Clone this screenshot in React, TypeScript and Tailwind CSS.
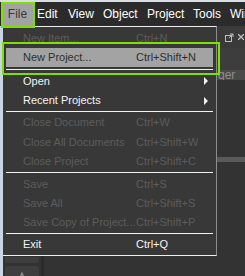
import React from 'react';

type Item =
  | { kind: 'sep'; h: string }
  | { kind: 'item'; label: string; shortcut?: string; disabled?: boolean; sub?: boolean; active?: boolean; h: string };

const items: Item[] = [
  { kind: 'item', label: 'New Item...', shortcut: 'Ctrl+N', disabled: true, h: 'h-[20px]' },
  { kind: 'item', label: 'New Project...', shortcut: 'Ctrl+Shift+N', active: true, h: 'h-[19px]' },
  { kind: 'sep', h: 'h-[4px]' },
  { kind: 'item', label: 'Open', sub: true, h: 'h-[20px]' },
  { kind: 'item', label: 'Recent Projects', sub: true, h: 'h-[19px]' },
  { kind: 'sep', h: 'h-[3px]' },
  { kind: 'item', label: 'Close Document', shortcut: 'Ctrl+W', disabled: true, h: 'h-[19px]' },
  { kind: 'item', label: 'Close All Documents', shortcut: 'Ctrl+Shift+W', disabled: true, h: 'h-[20px]' },
  { kind: 'item', label: 'Close Project', shortcut: 'Ctrl+Shift+C', disabled: true, h: 'h-[19px]' },
  { kind: 'sep', h: 'h-[3px]' },
  { kind: 'item', label: 'Save', shortcut: 'Ctrl+S', disabled: true, h: 'h-[20px]' },
  { kind: 'item', label: 'Save All', shortcut: 'Ctrl+Shift+S', disabled: true, h: 'h-[19px]' },
  { kind: 'item', label: 'Save Copy of Project...', shortcut: 'Ctrl+Shift+P', disabled: true, h: 'h-[19px]' },
  { kind: 'sep', h: 'h-[3px]' },
  { kind: 'item', label: 'Exit', shortcut: 'Ctrl+Q', h: 'h-[19px]' },
];

// menu bar labels with the width each one takes up
const menus = [
  { label: 'Edit', w: 'w-[31px]' },
  { label: 'View', w: 'w-[35px]' },
  { label: 'Object', w: 'w-[44px]' },
  { label: 'Project', w: 'w-[46px]' },
  { label: 'Tools', w: 'w-[37px]' },
  { label: 'Window', w: 'w-[50px]' },
];

function MenuRow({ item }: { item: Item }) {
  if (item.kind === 'sep') {
    return (
      <div className={`${item.h} flex items-center px-[3px]`}>
        <div className="h-px w-full bg-[#f2f2f2]" />
      </div>
    );
  }
  const color = item.active ? 'text-[#303030]' : item.disabled ? 'text-[#5c5c5c]' : 'text-[#f4f4f4]';
  return (
    <div className={`${item.h} px-[3px]`}>
      <div className={`h-full flex items-center ${item.active ? 'bg-[#a3a3a3]' : ''} ${color}`}>
        <span className="pl-[17px] w-[130px] shrink-0 whitespace-nowrap overflow-hidden">{item.label}</span>
        <span className="whitespace-nowrap">{item.shortcut}</span>
        {item.sub && (
          <svg width="5" height="8" viewBox="0 0 5 8" className="ml-auto mr-[4px]">
            <path d="M0 0 L4 4 L0 8 Z" fill="#f0f0f0" />
          </svg>
        )}
      </div>
    </div>
  );
}

export default function App() {
  return (
    <div className="relative w-[245px] h-[276px] overflow-hidden bg-[#333333] font-['Liberation_Sans',Arial,sans-serif] text-[11px] leading-none">
      <div className="h-[2px] bg-[#d9dee4]" />

      {/* menu bar */}
      <div className="h-[24px] flex items-center overflow-hidden bg-[#2b2b2b] text-[12px] text-white whitespace-nowrap">
        <div className="h-full ml-[2px] w-[31px] shrink-0 flex items-center justify-center bg-[#a3a3a3] text-[#3a3a3a]">
          File
        </div>
        <div className="w-[4px] shrink-0" />
        {menus.map((m) => (
          <div key={m.label} className={`${m.w} shrink-0 h-full flex items-center`}>
            {m.label}
          </div>
        ))}
      </div>

      <div className="flex h-[250px]">
        <div className="w-[3px] bg-[#c8d5e2]" />

        <div className="w-[214px] flex flex-col">
          {/* dropdown */}
          <div className="bg-[#383838] border-t border-t-[#efefef] border-b border-b-[#efefef] border-r border-r-[#8c8c8c] pt-px pb-px">
            {items.map((it, i) => (
              <MenuRow key={i} item={it} />
            ))}
          </div>
          {/* bits of the window under the menu */}
          <div className="flex-1 flex">
            <div className="w-[38px] flex flex-col gap-[3px] pt-px px-[2px]">
              <div className="h-[6px] rounded-b-[3px] bg-[#3e3e3e]" />
              <div className="h-[14px] rounded-[3px] bg-[#3e3e3e] flex items-end justify-center">
                <svg width="8" height="8" viewBox="0 0 8 8">
                  <path d="M1 8 L4 1 L7 8" stroke="#8a8a8a" strokeWidth="1.4" fill="none" />
                </svg>
              </div>
            </div>
            <div className="w-[3px] bg-[#2a2a2a]" />
          </div>
        </div>

        {/* right panel */}
        <div className="flex-1 flex flex-col">
          <div className="h-[22px] bg-[#3a3a3a] flex items-center justify-end gap-[4px] pr-[1px]">
            <svg width="9" height="9" viewBox="0 0 9 9">
              <rect x="0.5" y="2.5" width="6" height="6" fill="none" stroke="#bdbdbd" />
              <path d="M4 5 L8 1 M5 1 H8 V4" stroke="#bdbdbd" fill="none" />
            </svg>
            <svg width="6" height="6" viewBox="0 0 6 6">
              <path d="M0 0 L6 6 M6 0 L0 6" stroke="#bdbdbd" strokeWidth="1.3" />
            </svg>
          </div>
          <div className="h-[22px] bg-[#3d3d3d]" />
          <div className="h-[10px] bg-[#4a4a4a] flex items-center text-[12px] text-[#8e8e8e] pl-[1px] overflow-hidden">
            ger
          </div>
          <div className="h-[77px]" />
          <div className="h-[5px] bg-[#5a5a5a]" />
        </div>
      </div>

      {/* annotation boxes */}
      <div className="absolute left-[1px] top-[2px] w-[34px] h-[26px] border-2 border-[#7ee000]" />
      <div className="absolute left-[2px] top-[42px] w-[218px] h-[33px] border-[2.5px] border-[#7ee000]" />
    </div>
  );
}
